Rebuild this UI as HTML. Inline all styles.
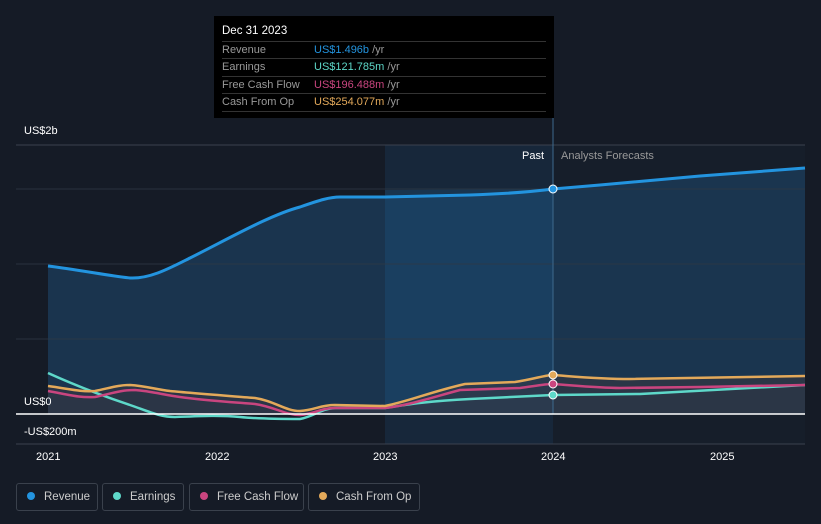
<!DOCTYPE html>
<html><head><meta charset="utf-8"><style>
body{margin:0;background:#151b26;font-family:"Liberation Sans",sans-serif;width:821px;height:524px;overflow:hidden;position:relative}
.tt{position:absolute;left:214px;top:16px;width:340px;height:102px;background:#000;color:#fff;font-size:11px}
.tt .h{position:absolute;left:8px;top:9px;font-size:11.5px}
.row{position:absolute;left:8px;width:324px;height:17px;border-top:1px solid #333;color:#999;line-height:17px}
.row span{position:absolute;left:92px}
.lg{position:absolute;top:483px;height:28px;border:1px solid #3a414c;border-radius:3px;color:#ccc;font-size:11.5px;line-height:26px;box-sizing:border-box}
.lg i{display:inline-block;width:8px;height:8px;border-radius:50%;margin:0 9px 0 10px}
.ax{position:absolute;color:#fff;font-size:11px}
</style></head><body>
<svg width="821" height="524" style="position:absolute;left:0;top:0">
<rect x="385" y="145" width="168" height="299" fill="#17273a"/>
<rect x="553" y="145" width="252" height="299" fill="#161e2a"/>
<path d="M48,266 C80,270 110,276 130,278 C150,279 170,268 190,258 C230,238 270,215 300,207 C320,200 330,197 340,197 L385,197 L470,195 C500,194 530,192 553,189 L600,185 L700,176 L805,168 L805,414 L48,414Z" fill="#1d3f5f" opacity="0.7"/>
<path d="M385,190 L553,189 L553,414 L385,414Z" fill="#1d4f78" opacity="0.35"/>
<path d="M48,386 L90,392 L125,385 L170,391 L220,396 L260,400 L300,411 L330,405 L385,406 L420,398 L465,384 L520,381 L553,375 L630,379 L805,376 L805,414 L48,414Z" fill="#3a3640" opacity="0.55"/>
<line x1="16" y1="145" x2="805" y2="145" stroke="#3b424d"/>
<line x1="16" y1="189" x2="805" y2="189" stroke="#2e3845" opacity="0.8"/>
<line x1="16" y1="264" x2="805" y2="264" stroke="#2e3845" opacity="0.8"/>
<line x1="16" y1="339" x2="805" y2="339" stroke="#2e3845" opacity="0.8"/>
<line x1="16" y1="444" x2="805" y2="444" stroke="#3b424d"/>
<line x1="553" y1="118" x2="553" y2="414" stroke="#3d6a8e"/>
<path d="M48,266 C80,270 110,276 130,278 C150,279 170,268 190,258 C230,238 270,215 300,207 C320,200 330,197 340,197 L385,197 L470,195 C500,194 530,192 553,189 L600,185 L700,176 L805,168" fill="none" stroke="#2394df" stroke-width="3"/>
<path d="M48,373 C70,383 100,395 130,405 C150,412 160,417 175,417 C200,416 220,415 240,417 C260,419 280,419 300,419 C315,416 320,409 335,408 L385,408 C410,404 430,401 470,399 L553,395 L640,394 L805,385" fill="none" stroke="#5ed8c9" stroke-width="2.5"/>
<path d="M48,391 C70,395 80,398 95,397 C110,394 120,390 135,390 C150,391 165,395 180,397 C200,400 230,402 255,404 C275,407 285,415 300,415 C315,414 320,408 335,408 L385,408 C410,405 430,398 460,390 L520,388 C535,386 545,384 553,384 C580,386 600,388 620,388 L700,387 L805,385" fill="none" stroke="#c9457f" stroke-width="2.5"/>
<path d="M48,386 C70,389 80,392 95,391 C110,388 118,385 130,385 C145,386 155,389 170,391 C190,393 230,396 255,398 C275,401 285,411 300,411 C315,410 320,405 335,405 L385,406 C410,401 430,392 465,384 L515,382 C535,379 545,375 553,375 C580,377 600,379 630,379 L805,376" fill="none" stroke="#e3a95a" stroke-width="2.5"/>
<line x1="16" y1="414" x2="805" y2="414" stroke="#fff" stroke-width="1.5"/>
<circle cx="553" cy="189" r="4" fill="#2394df" stroke="#fff"/>
<circle cx="553" cy="375" r="4" fill="#e3a95a" stroke="#fff"/>
<circle cx="553" cy="384" r="4" fill="#c9457f" stroke="#fff"/>
<circle cx="553" cy="395" r="4" fill="#5ed8c9" stroke="#fff"/>
</svg>
<div class="ax" style="left:24px;top:125px">US$2b</div>
<div class="ax" style="left:24px;top:396px">US$0</div>
<div class="ax" style="left:24px;top:426px">-US$200m</div>
<div class="ax" style="left:522px;top:150px">Past</div>
<div class="ax" style="left:561px;top:150px;color:#999">Analysts Forecasts</div>
<div class="ax" style="left:36px;top:451px">2021</div>
<div class="ax" style="left:205px;top:451px">2022</div>
<div class="ax" style="left:373px;top:451px">2023</div>
<div class="ax" style="left:541px;top:451px">2024</div>
<div class="ax" style="left:710px;top:451px">2025</div>
<div class="tt"><div class="h">Dec 31 2023</div>
<div class="row" style="top:25px">Revenue<span style="color:#2394df">US$1.496b <b style="font-weight:normal;color:#999">/yr</b></span></div>
<div class="row" style="top:42px">Earnings<span style="color:#5ed8c9">US$121.785m <b style="font-weight:normal;color:#999">/yr</b></span></div>
<div class="row" style="top:60px">Free Cash Flow<span style="color:#c9457f">US$196.488m <b style="font-weight:normal;color:#999">/yr</b></span></div>
<div class="row" style="top:77px;border-bottom:1px solid #333">Cash From Op<span style="color:#e3a95a">US$254.077m <b style="font-weight:normal;color:#999">/yr</b></span></div>
</div>
<div class="lg" style="left:16px;width:82px"><i style="background:#2394df"></i>Revenue</div>
<div class="lg" style="left:102px;width:82px"><i style="background:#5ed8c9"></i>Earnings</div>
<div class="lg" style="left:189px;width:115px"><i style="background:#c9457f"></i>Free Cash Flow</div>
<div class="lg" style="left:308px;width:112px"><i style="background:#e3a95a"></i>Cash From Op</div>
</body></html>
